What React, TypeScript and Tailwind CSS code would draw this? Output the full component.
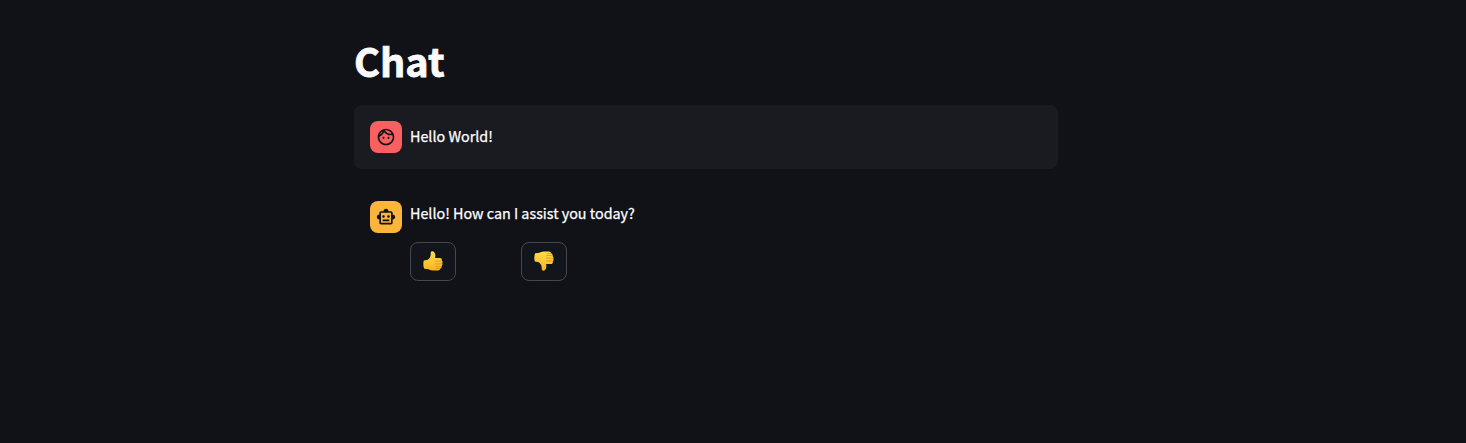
import { MdOutlineFace, MdOutlineSmartToy } from "react-icons/md";

function Thumb({ down = false }: { down?: boolean }) {
  const id = down ? "thumb-down" : "thumb-up";
  return (
    <svg viewBox="0 0 20 20" className={down ? "mb-0.5 size-5 -scale-y-100" : "mb-0.5 size-5"} aria-hidden="true">
      <defs>
        <linearGradient id={id} x1="0" y1={down ? "1" : "0"} x2="0" y2={down ? "0" : "1"}>
          <stop offset="0" stopColor="#ffdc4e" />
          <stop offset="1" stopColor="#f8b520" />
        </linearGradient>
      </defs>
      <path
        d="M.8 9.6C2.8 9.3 4.6 9.3 5.7 8.1C7.3 6.4 7.9 4.7 7.7 2.2C7.7.4 9 .1 10.3.5C12.3 1.4 12.7 4.3 12.1 7H16.8C18.4 7 19.2 8.2 18.8 9.4C19.7 10.1 19.7 11.4 19.2 12.2C19.7 13.1 19.4 14.6 18.6 15.1C18.9 16.3 18.2 17.1 17.3 17.5C17.1 18.8 16.2 19.5 14.9 19.5H10C7.2 19.5 5.8 18.2 3.8 18L1.2 17.7C.2 15.3 0 12.3.8 9.6Z"
        fill={`url(#${id})`}
      />
      <path
        d="M18.6 9.7C17.4 10.3 15.5 10.3 12.6 10.1M19 12.5C17 13.1 15.4 13.1 12.4 12.9M18.4 15.2C16.5 15.7 15.2 15.6 12.9 15.4M17.1 17.5C15.7 17.7 14.6 17.6 13.2 17.5"
        fill="none"
        stroke="#d08a18"
        strokeWidth=".7"
        strokeLinecap="round"
      />
    </svg>
  );
}

export default function App() {
  return (
    <main className="flex h-[443px] w-full flex-col bg-[#111217] pl-[354px] pt-[33px] font-['Noto_Sans_CJK_JP',sans-serif] text-[#fafafa]">
      <h1 className="text-[39.6px] font-bold leading-[53px] [-webkit-text-stroke:0.8px_#fafafa]">Chat</h1>
      <section className="mt-[19px] flex h-16 w-[704px] items-center gap-2 rounded-lg bg-[#1a1b20] px-4">
        <div className="flex size-8 items-center justify-center rounded-lg bg-[#f96062] text-[#111217]">
          <MdOutlineFace size={20} />
        </div>
        <p className="pb-0.5 text-[14.34px] font-normal leading-6 text-white [-webkit-text-stroke:0.25px_#ffffff]">Hello World!</p>
      </section>
      <section className="mt-4 flex w-[704px] gap-2 p-4">
        <div className="flex size-8 items-center justify-center rounded-lg bg-[#fbb53d] text-[#111217]">
          <MdOutlineSmartToy size={20} />
        </div>
        <div>
          <p className="text-[14.34px] font-normal leading-6 text-white [-webkit-text-stroke:0.25px_#ffffff]">Hello! How can I assist you today?</p>
          <div className="mt-[17px] flex gap-[65px]">
            <button aria-label="Good response" className="flex h-[39px] w-[46px] items-center justify-center rounded-lg border border-[#46474d] bg-[#12151c]">
              <Thumb />
            </button>
            <button aria-label="Bad response" className="flex h-[39px] w-[46px] items-center justify-center rounded-lg border border-[#46474d] bg-[#12151c]">
              <Thumb down />
            </button>
          </div>
        </div>
      </section>
    </main>
  );
}
